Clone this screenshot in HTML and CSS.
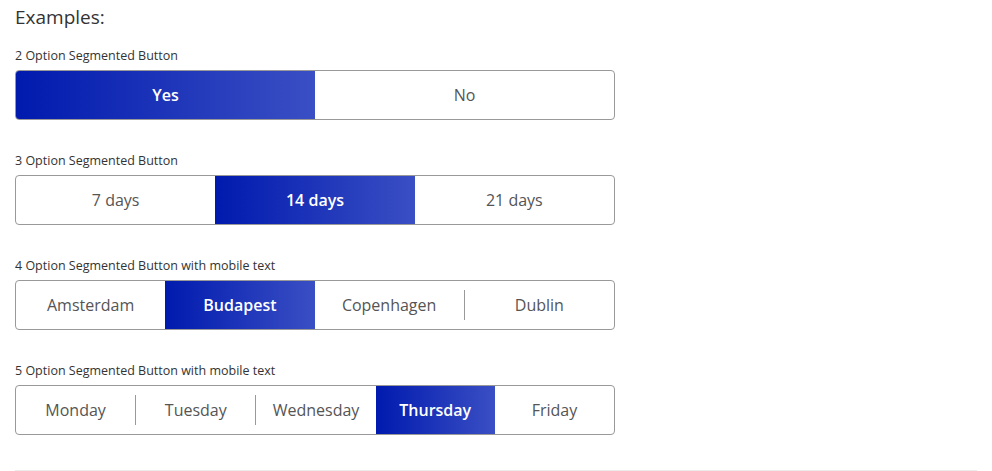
FILE: index.html
```html
<!DOCTYPE html>
<html>
<head>
<meta charset="utf-8">
<link rel="stylesheet" href="styles.css">
</head>
<body>
<div class="page">
  <h2 class="title">Examples:</h2>

  <div class="example">
    <div class="label">2 Option Segmented Button</div>
    <div class="seg">
      <div class="opt active">Yes</div>
      <div class="opt">No</div>
    </div>
  </div>

  <div class="example">
    <div class="label">3 Option Segmented Button</div>
    <div class="seg">
      <div class="opt">7 days</div>
      <div class="opt active">14 days</div>
      <div class="opt">21 days</div>
    </div>
  </div>

  <div class="example">
    <div class="label">4 Option Segmented Button with mobile text</div>
    <div class="seg">
      <div class="opt">Amsterdam</div>
      <div class="opt active">Budapest</div>
      <div class="opt">Copenhagen</div>
      <div class="sep"></div>
      <div class="opt">Dublin</div>
    </div>
  </div>

  <div class="example">
    <div class="label">5 Option Segmented Button with mobile text</div>
    <div class="seg">
      <div class="opt">Monday</div>
      <div class="sep"></div>
      <div class="opt">Tuesday</div>
      <div class="sep"></div>
      <div class="opt">Wednesday</div>
      <div class="opt active">Thursday</div>
      <div class="opt">Friday</div>
    </div>
  </div>

  <hr class="rule">
</div>
</body>
</html>
```

FILE: styles.css
```css
html, body {
  margin: 0;
  padding: 0;
  background: #fff;
}
.page {
  padding: 5px 15px 0 15px;
  font-family: "Open Sans", "Noto Sans", sans-serif;
  color: #333;
}
.title {
  margin: 0 0 18px 0;
  font-size: 19px;
  line-height: 24px;
  font-weight: 400;
  color: #333;
}
.example {
  margin-bottom: 32px;
}
.example:last-of-type {
  margin-bottom: 35px;
}
.label {
  font-size: 12.5px;
  line-height: 16px;
  padding-top: 1px;
  margin-bottom: 6px;
  color: #333;
}
.seg {
  width: 598px;
  height: 48px;
  border: 1px solid #999;
  border-radius: 4px;
  display: flex;
  align-items: center;
  overflow: hidden;
}
.opt {
  flex: 1 1 0;
  height: 100%;
  display: flex;
  align-items: center;
  justify-content: center;
  font-size: 16px;
  color: #555;
}
.opt.active {
  background: linear-gradient(to right, #001aae, #3a4fc4);
  color: #fff;
  font-weight: 600;
}
.sep {
  width: 1px;
  height: 30px;
  background: #999;
  flex: 0 0 1px;
}
.rule {
  margin: 0;
  border: 0;
  height: 2px;
  background: #ebebeb;
}
```
